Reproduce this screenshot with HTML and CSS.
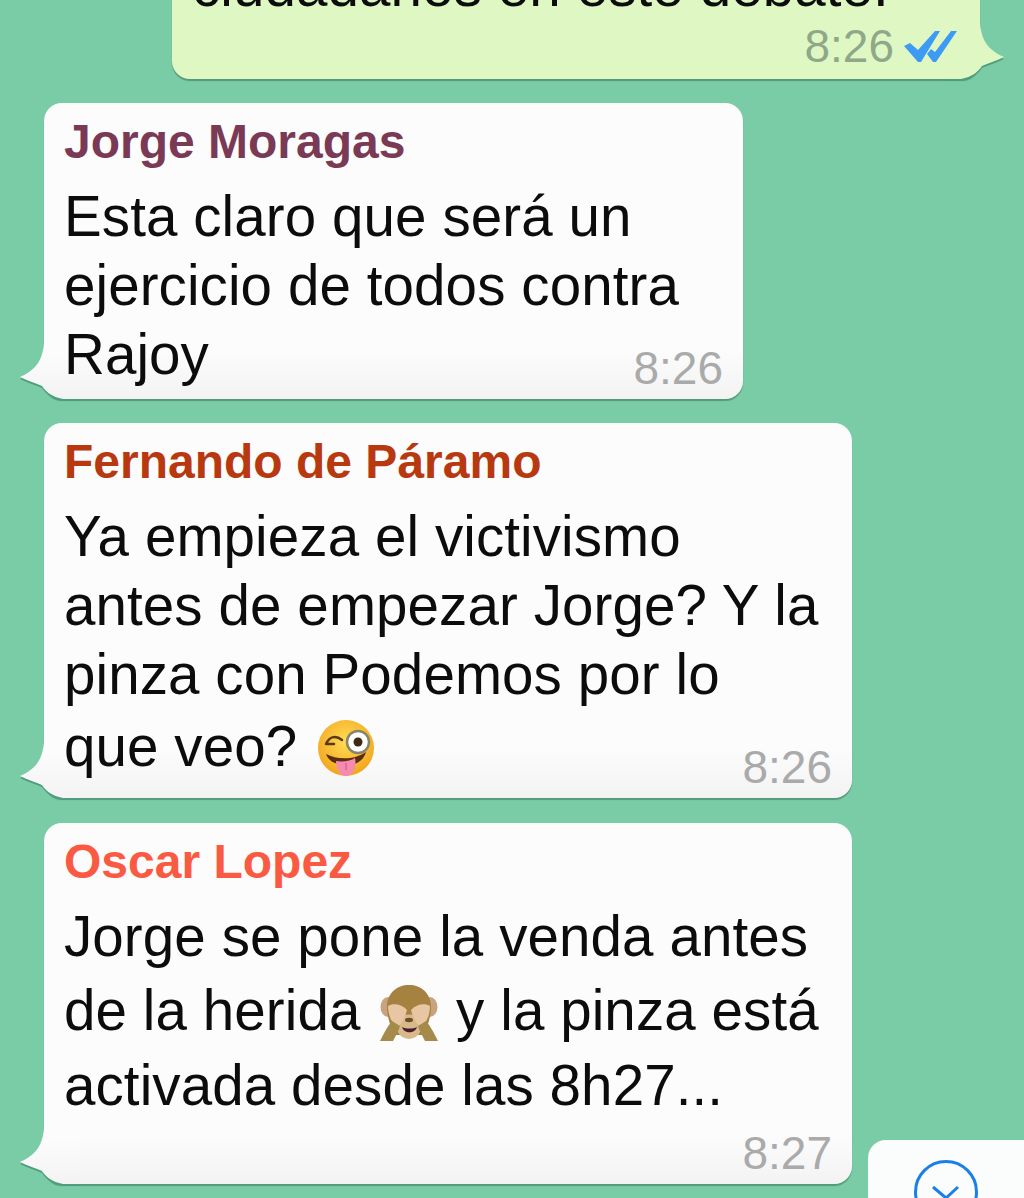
FILE: index.html
```html
<!DOCTYPE html>
<html lang="es">

<head>
    <meta charset="UTF-8">
    <title>Chat</title>
    <link rel="stylesheet" href="styles.css">
</head>

<body>
    <svg class="defs" width="0" height="0">
        <defs>
            <linearGradient id="tailFill" x1="0" y1="1" x2="0" y2="0">
                <stop offset="0" stop-color="#f3f3f3" />
                <stop offset="0.83" stop-color="#fcfcfc" />
                <stop offset="1" stop-color="#fcfcfc" />
            </linearGradient>
            <radialGradient id="face" cx="50%" cy="38%" r="62%">
                <stop offset="0" stop-color="#ffdc55" />
                <stop offset="1" stop-color="#f2a51e" />
            </radialGradient>
        </defs>
    </svg>

    <div class="chat">
        <div class="bubble out">
            <p class="line">ciudadanos en este debate.</p>
            <div class="meta meta-out">
                <span>8:26</span>
                <svg class="ticks" viewBox="0 0 54 34">
                    <path d="M0 17 L6 14 L14 21 L31 2 L36 2 L17 33 L14 33 Z" fill="#3d9bf3" />
                    <path d="M23 25 L27 20 L31 23 L47 2 L53 2 L32 33 L29 33 Z" fill="#3d9bf3" />
                </svg>
            </div>
            <svg class="tail tail-out" viewBox="0 0 60 60">
                <path d="M36 5 C38 20 42 30 60 38 C52 42 44 44 38 47 C34 53 28 58 17 60 L0 60 L0 5 Z" fill="#4f9d7e" transform="translate(0 2)" />
                <path d="M36 5 C38 20 42 30 60 38 C52 42 44 44 38 47 C34 53 28 58 17 60 L0 60 L0 5 Z" fill="#dff8c3" />
            </svg>
        </div>

        <div class="bubble in short">
            <div class="name moragas">Jorge Moragas</div>
            <p class="line">Esta claro que será un</p>
            <p class="line">ejercicio de todos contra</p>
            <p class="line">Rajoy</p>
            <div class="meta">8:26</div>
            <svg class="tail tail-in" viewBox="0 0 60 60">
                <path d="M24 5 C22 20 18 30 0 38 C8 42 16 44 22 47 C26 53 32 58 43 60 L60 60 L60 5 Z" fill="#4f9d7e" transform="translate(0 2)" />
                <path d="M24 5 C22 20 18 30 0 38 C8 42 16 44 22 47 C26 53 32 58 43 60 L60 60 L60 5 Z" fill="url(#tailFill)" />
            </svg>
        </div>

        <div class="bubble in">
            <div class="name paramo">Fernando de Páramo</div>
            <p class="line">Ya empieza el victivismo</p>
            <p class="line">antes de empezar Jorge? Y la</p>
            <p class="line">pinza con Podemos por lo</p>
            <p class="line tall">que veo?
                <svg class="emoji" viewBox="0 0 58 58">
                    <circle cx="29" cy="29" r="28" fill="url(#face)" />
                    <path d="M9 25 C13 16 20 17 25 21 M9 25 L17 25" fill="none" stroke="#5b3a12" stroke-width="2.5" stroke-linecap="round" />
                    <circle cx="41" cy="23" r="11" fill="#fff" stroke="#8a8468" stroke-width="2.5" />
                    <circle cx="41" cy="23" r="4.5" fill="#3d2a10" />
                    <path d="M9 35 C20 41 38 41 49 33 C46 43 38 46 29 46 C20 46 12 43 9 35 Z" fill="#5b2d0c" />
                    <path d="M19 42 C26 43 34 42 38 39 C40 48 36 57 29 57 C23 57 19 49 19 42 Z" fill="#f58bb0" />
                    <path d="M29 44 L29 51" stroke="#d9658f" stroke-width="1.5" />
                </svg>
            </p>
            <div class="meta">8:26</div>
            <svg class="tail tail-in" viewBox="0 0 60 60">
                <path d="M24 5 C22 20 18 30 0 38 C8 42 16 44 22 47 C26 53 32 58 43 60 L60 60 L60 5 Z" fill="#4f9d7e" transform="translate(0 2)" />
                <path d="M24 5 C22 20 18 30 0 38 C8 42 16 44 22 47 C26 53 32 58 43 60 L60 60 L60 5 Z" fill="url(#tailFill)" />
            </svg>
        </div>

        <div class="bubble in last">
            <div class="name lopez">Oscar Lopez</div>
            <p class="line">Jorge se pone la venda antes</p>
            <p class="line taller">de la herida
                <svg class="emoji" viewBox="0 0 58 58">
                    <ellipse cx="8" cy="22" rx="7.5" ry="10" fill="#c9a27e" />
                    <ellipse cx="50" cy="22" rx="7.5" ry="10" fill="#c9a27e" />
                    <path d="M7 22 C7 8 17 0 29 0 C41 0 51 8 51 22 C51 34 46 44 44 50 L14 50 C12 44 7 34 7 22 Z" fill="#a5823f" />
                    <path d="M17 34 C22 28 36 28 41 34 C45 44 38 54 29 54 C20 54 13 44 17 34 Z" fill="#d8b98a" />
                    <path d="M22 42 C26 44 33 44 37 42 C35 49 24 49 22 42 Z" fill="#4a1c2c" />
                    <ellipse cx="29" cy="35" rx="4" ry="2.2" fill="#6b5028" />
                    <path d="M8 21 C13 18 22 19 27 25 C25 33 22 39 17 42 C11 38 8 29 8 21 Z" fill="#e8c6a4" />
                    <path d="M50 21 C45 18 36 19 31 25 C33 33 36 39 41 42 C47 38 50 29 50 21 Z" fill="#e8c6a4" />
                    <path d="M12 36 C7 42 3 50 0 56 L13 56 C16 50 19 45 20 41 Z" fill="#a58a4a" />
                    <path d="M46 36 C51 42 55 50 58 56 L45 56 C42 50 39 45 38 41 Z" fill="#a58a4a" />
                </svg>
                y la pinza está
            </p>
            <p class="line">activada desde las 8h27...</p>
            <div class="meta">8:27</div>
            <svg class="tail tail-in" viewBox="0 0 60 60">
                <path d="M24 5 C22 20 18 30 0 38 C8 42 16 44 22 47 C26 53 32 58 43 60 L60 60 L60 5 Z" fill="#4f9d7e" transform="translate(0 2)" />
                <path d="M24 5 C22 20 18 30 0 38 C8 42 16 44 22 47 C26 53 32 58 43 60 L60 60 L60 5 Z" fill="url(#tailFill)" />
            </svg>
        </div>
    </div>

    <div class="scroll-btn">
        <svg viewBox="0 0 156 58">
            <circle cx="78" cy="52" r="30.5" fill="none" stroke="#1a7fe8" stroke-width="3" />
            <path d="M65 47 L78 58 L90 47" fill="none" stroke="#1a7fe8" stroke-width="3" />
        </svg>
    </div>
</body>

</html>
```

FILE: styles.css
```css
html,
body {
    margin: 0;
    padding: 0;
    height: 1198px;
    overflow: hidden;
}

body {
    position: relative;
    background-color: #7accA6;
    font-family: "Liberation Sans", Arial, sans-serif;
    color: #0c0c0c;
}

.defs {
    position: absolute;
}

.chat {
    display: flex;
    flex-direction: column;
    gap: 24px;
    margin-top: -48px;
    padding: 0 44px;
}

.bubble {
    position: relative;
    isolation: isolate;
    box-sizing: border-box;
    width: 808px;
    padding: 13px 20px 13px;
    border-radius: 18px;
    background: linear-gradient(to top, #f3f3f3 0, #fcfcfc 50px);
    box-shadow: 0 2px 1px rgba(40, 90, 70, 0.45);
}

.out {
    align-self: flex-end;
    padding: 0 20px;
    height: 127px;
    background: #dff8c3;
}

.short {
    width: 699px;
    padding-bottom: 10px;
}

.last {
    margin-top: 1px;
    padding-bottom: 64px;
}

.name {
    height: 52px;
    margin-bottom: 14px;
    font-size: 48px;
    font-weight: bold;
    line-height: 52px;
}

.moragas {
    color: #7a3a55;
}

.paramo {
    color: #b8390f;
}

.lopez {
    color: #fb5a42;
}

.line {
    margin: 0;
    height: 69px;
    font-size: 56.5px;
    line-height: 69px;
    letter-spacing: 0.1px;
    white-space: nowrap;
}

.tall {
    height: 76px;
    line-height: 76px;
}

.taller {
    height: 80px;
    line-height: 80px;
}

.emoji {
    width: 58px;
    height: 58px;
    margin: 0 2px 0 4px;
    vertical-align: middle;
}

.tall .emoji {
    margin-top: -6px;
}

.taller .emoji {
    margin-top: -2px;
}

.meta {
    position: absolute;
    right: 20px;
    bottom: 6px;
    font-size: 46px;
    line-height: 50px;
    color: #aaaaaa;
}

.meta-out {
    display: flex;
    align-items: center;
    gap: 10px;
    right: 22px;
    bottom: 8px;
    color: #8fa88a;
}

.ticks {
    width: 54px;
    height: 34px;
}

.tail {
    position: absolute;
    z-index: -1;
    bottom: 0;
    width: 60px;
    height: 60px;
    overflow: visible;
}

.tail-in {
    left: -24px;
}

.tail-out {
    right: -24px;
}

.scroll-btn {
    position: absolute;
    left: 868px;
    top: 1140px;
    width: 156px;
    height: 58px;
    border-top-left-radius: 18px;
    background-color: #fbfcfc;
}

.scroll-btn svg {
    display: block;
    width: 156px;
    height: 58px;
}
```
